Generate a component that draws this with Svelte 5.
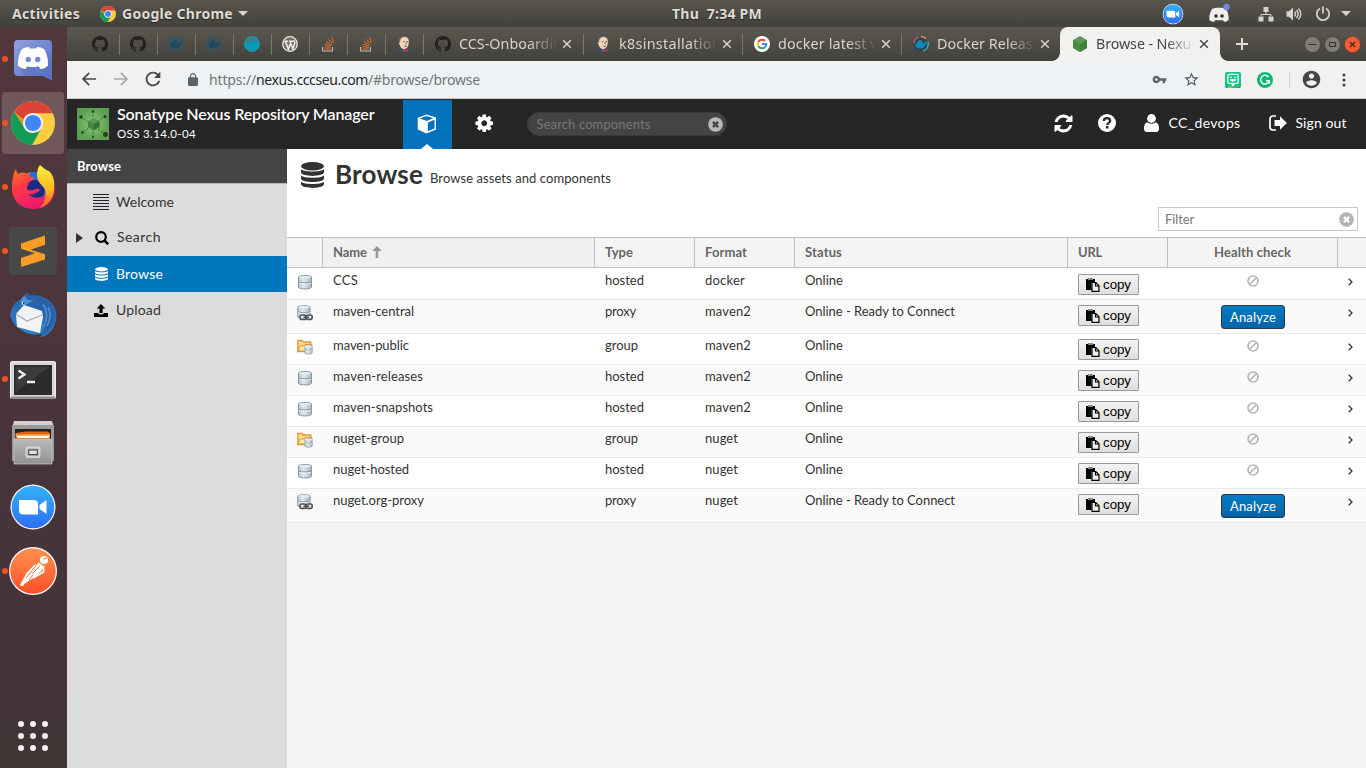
<script>
  const pinned = ['github', 'github', 'dockerDim', 'dockerDim', 'dockerTeal', 'wordpress', 'stack', 'stack', 'jenkins'];
  const tabs = [
    { icon: 'github', label: 'CCS-Onboardin', w: 103, size: 160 },
    { icon: 'jenkins', label: 'k8sinstallation', w: 102, size: 159 },
    { icon: 'google', label: 'docker latest ve', w: 108, size: 159 },
    { icon: 'dockerRing', label: 'Docker Release', w: 104, size: 158 },
    { icon: 'nexus', label: 'Browse - Nexus', w: 102, size: 160, active: true }
  ];
  const dock = [
    { icon: 'discord', running: true },
    { icon: 'chrome', running: true, focused: true },
    { icon: 'firefox', running: true },
    { icon: 'sublime', running: true },
    { icon: 'thunderbird' },
    { icon: 'terminal', running: true },
    { icon: 'files' },
    { icon: 'zoom' },
    { icon: 'postman', running: true }
  ];
  const nav = [
    { icon: 'lines', label: 'Welcome', w: 58 },
    { icon: 'search', label: 'Search', w: 44, tree: true },
    { icon: 'db', label: 'Browse', w: 47, selected: true },
    { icon: 'upload', label: 'Upload', w: 45 }
  ];
  const rows = [
    ['CCS', 25, 'hosted', 'docker', 40],
    ['maven-central', 81, 'proxy', 'maven2', 46],
    ['maven-public', 76, 'group', 'maven2', 46],
    ['maven-releases', 90, 'hosted', 'maven2', 46],
    ['maven-snapshots', 100, 'hosted', 'maven2', 46],
    ['nuget-group', 71, 'group', 'nuget', 33],
    ['nuget-hosted', 76, 'hosted', 'nuget', 33],
    ['nuget.org-proxy', 91, 'proxy', 'nuget', 33]
  ];
  const typeWidth = { hosted: 39, proxy: 31, group: 33 };
  const gh = 'M8 0C3.58 0 0 3.58 0 8c0 3.54 2.29 6.53 5.47 7.59.4.07.55-.17.55-.38 0-.19-.01-.82-.01-1.49-2.01.37-2.53-.49-2.69-.94-.09-.23-.48-.94-.82-1.13-.28-.15-.68-.52-.01-.53.63-.01 1.08.58 1.23.82.72 1.21 1.87.87 2.33.66.07-.52.28-.87.51-1.07-1.78-.2-3.64-.89-3.64-3.95 0-.87.31-1.59.82-2.15-.08-.2-.36-1.02.08-2.12 0 0 .67-.21 2.2.82.64-.18 1.32-.27 2-.27s1.36.09 2 .27c1.53-1.04 2.2-.82 2.2-.82.44 1.1.16 1.92.08 2.12.51.56.82 1.27.82 2.15 0 3.07-1.87 3.75-3.65 3.95.29.25.54.73.54 1.48 0 1.07-.01 1.93-.01 2.2 0 .21.15.46.55.38A8.01 8.01 0 0 0 16 8c0-4.42-3.58-8-8-8z';

  // Spreads the letters of a label evenly over a given width.
  function fit(node, w) {
    const n = [...node.textContent].length;
    const natural = node.getBoundingClientRect().width;
    node.style.letterSpacing = `${(w - natural) / n}px`;
    node.style.width = `${w}px`;
  }
</script>

{#snippet T(text, w)}<span class="t" use:fit={w}>{text}</span>{/snippet}

{#snippet whale(c)}
  <path fill={c} d="M2.200 8h8.500c1 0 1.300-.9 1-1.900l.9-.9c.6.5.8 1 .7 1.500.6-.1 1.100 0 1.500.3-.4.9-1.100 1.300-2.100 1.200-.9 2.700-2.800 4.300-5.700 4.300C3.900 12.500 2.300 11 2.200 8zM3.500 5.900h6.700v2H3.500zM5.400 4h3.200v2H5.400z" />
{/snippet}

{#snippet chromeLogo(s)}
  <svg width={s} height={s} viewBox="0 0 48 48">
    <circle cx="24" cy="24" r="24" fill="#ffcd40" />
    <path fill="#db4437" d="M24 0A24 24 0 0 1 45.500 13.300H24A11 11 0 0 0 14 19.500L3.500 11.600A24 24 0 0 1 24 0z" />
    <path fill="#0f9d58" d="M3.500 11.600 14.500 29.500A11 11 0 0 0 24 35L33 30 23 48A24 24 0 0 1 3.500 11.600z" />
    <path fill="#a52714" opacity=".35" d="M3.500 11.600 13.500 28 15 18z" />
    <circle cx="24" cy="24" r="11" fill="#f1f1f1" /><circle cx="24" cy="24" r="8.800" fill="#4285f4" />
  </svg>
{/snippet}

{#snippet discordFace()}
  <path fill="#fff" d="M12.500 14.500c3-2.200 6-2.700 7.500-2.500l.8 1.600h6.400l.8-1.600c1.500-.2 4.500.3 7.500 2.500 2.300 4 3.800 9.500 3.500 16-2.500 2.700-5 3.200-7.600 3.400l-1.700-2.300 2-1.200c-4.800 2-10.600 2-15.400 0l2 1.200-1.700 2.300c-2.600-.2-5.100-.7-7.600-3.400-.3-6.500 1.200-12 3.500-16z" />
  <circle cx="19.300" cy="24.500" r="2.700" fill="#7289da" /><circle cx="28.700" cy="24.500" r="2.700" fill="#7289da" />
{/snippet}

{#snippet camera()}
  <circle cx="24" cy="24" r="22.500" fill="#fff" /><circle cx="24" cy="24" r="21.300" fill="url(#zm)" />
  <path fill="#fff" d="M10 17h15a4 4 0 0 1 4 4v10.500H14a4 4 0 0 1-4-4zM30.500 22l7-5v14l-7-5z" />
{/snippet}

{#snippet tabIcon(k)}
  <svg class="ti" width="16" height="16" viewBox="0 0 16 16">
    {#if k === 'github'}<path d={gh} fill="#22211f" />
    {:else if k === 'dockerDim'}<circle cx="8" cy="8" r="7.300" fill="#47504f" stroke="#31566a" stroke-width="1.200" />{@render whale('#1f4a66')}
    {:else if k === 'dockerTeal'}<circle cx="8" cy="8" r="7.300" fill="#577477" stroke="#149cb2" stroke-width="1.300" /><path fill="#049ab4" d="M1.300 7.800 3 5.800l1.600 1.100 2-3 1.500 1.800L10 2.800l2.200 3.600L14 4.700l.7 2.800c0 4.600-3 6.800-6.700 6.800s-6.500-2-6.700-6.500z" />
    {:else if k === 'wordpress'}<circle cx="8" cy="8" r="7.300" fill="#716e67" stroke="#ecebe8" stroke-width="1.300" /><path d="M2.600 5.300h3.600M7.200 5.300h4M3.400 5.600l3 7.500 1.900-5.400M8.100 5.600l2.700 7.300 2-5.800c.3-1.300-.8-1.600-1-2.700" fill="none" stroke="#f2f1ef" stroke-width="1.500" />
    {:else if k === 'stack'}<path d="M2.600 11v4h9.800v-4" fill="none" stroke="#c0bfbe" stroke-width="1.100" /><path d="M4.300 13h6.400M4.500 10.800l6.300.5M4.800 8.300l6.200 1.600M6 5.700l5.500 3M8.500 3.300l3.800 4.300M11.800 1.300l1.600 5.300" stroke="#f0702a" stroke-width="1" />
    {:else if k === 'jenkins'}<path fill="#34506a" d="M2 13.500 5 12h6l3 1.500V16H2z" /><path fill="#776a60" d="M2.800 7C2 4 4 .3 8 .2c3.500 0 5.300 2.500 5 6L12 9H4z" /><path fill="#f0d5b8" d="M4.200 4.500C5 1.300 7.300.7 9.500 1c2.700.5 3.500 3 3.200 6-.3 3.500-1.700 6-4.500 6C5.300 13 4 10.500 3.700 8.500 2.500 8 3 6 4.200 6.500z" /><path d="M7 5.700h1.600M10.400 5.700h1.500M8 10c1.200.5 2 .4 3-.2M10 6.500l.3 1.700" fill="none" stroke="#5a453a" stroke-width=".9" /><path fill="#d33833" d="m7 13 2.300 1 2.500-1 .3 2.700-2.700-.8-2.400.9z" />
    {:else if k === 'google'}<circle cx="8" cy="8" r="8" fill="#fff" /><g fill="none" stroke-width="2"><path stroke="#ea4335" d="M4.300 6A4.300 4.300 0 0 1 11 4.900" /><path stroke="#fbbc05" d="M4.300 10a4.300 4.300 0 0 1 0-4" /><path stroke="#34a853" d="M4.300 10a4.300 4.300 0 0 0 6.600 1.200" /><path stroke="#4285f4" d="M8 8h4.300a4.300 4.300 0 0 1-1.500 3.300" /></g>
    {:else if k === 'dockerRing'}<circle cx="8" cy="8" r="7" fill="#34434b" /><g fill="none" stroke-width="1.200"><path stroke="#e95a78" d="M1 7a7.200 7.200 0 0 1 5-6" /><path stroke="#f79a4b" d="M8 .7a7.300 7.300 0 0 1 5 2" /><path stroke="#1ec4ca" d="M14.800 5.500a7.300 7.300 0 0 1-4.500 9.400" /><path stroke="#244d66" d="M1 10a7.300 7.300 0 0 0 6 5.300" /></g>{@render whale('#1288bd')}
    {:else}<path fill="#5c9a54" d="m8 0 7 4v8l-7 4-7-4V4z" /><path fill="#417e3b" d="m8 8 7-4v8l-7 4z" /><path fill="#4a8b43" d="M8 8 1 4v8l7 4z" />{/if}
  </svg>
{/snippet}

{#snippet db(w, h, c)}
  <svg width={w} height={h} viewBox="0 0 24 26" preserveAspectRatio="none" fill={c}>
    <ellipse cx="12" cy="4.200" rx="12" ry="4.200" />
    <path d="M0 7.300c3 3 21 3 24 0v3.300c-1 4.400-23 4.400-24 0zM0 13.500c3 3 21 3 24 0v3.300c-1 4.400-23 4.400-24 0zM0 19.700c3 3 21 3 24 0v2.300c-1 5.200-23 5.200-24 0z" />
  </svg>
{/snippet}

{#snippet clearIcon(bg, fg)}
  <svg width="15" height="15" viewBox="0 0 14 14"><circle cx="7" cy="7" r="6.800" fill={bg} /><path d="m4.600 4.600 4.800 4.800m0-4.800L4.600 9.400" stroke={fg} stroke-width="2.200" /></svg>
{/snippet}

{#snippet cyl()}
  <path fill="url(#cy)" stroke="#8797a3" stroke-width="1" d="M1.500 3C1.500 1 14.500 1 14.500 3v10c0 2.600-13 2.600-13 0z" />
  <ellipse cx="8" cy="3.200" rx="6" ry="1.500" fill="#e3ebf1" /><path d="M2 7.800c2 1.500 10 1.500 12 0" fill="none" stroke="#7f909c" /><path d="M2 9c2 1.500 10 1.500 12 0" fill="none" stroke="#edf3f6" />
{/snippet}

<svg class="defs" width="0" height="0">
  <defs>
    <linearGradient id="zm" x2="0" y2="1"><stop stop-color="#33b2fb" /><stop offset="1" stop-color="#2d6df6" /></linearGradient>
    <linearGradient id="pm" x2="0" y2="1"><stop stop-color="#ff9150" /><stop offset="1" stop-color="#fd4f28" /></linearGradient>
    <linearGradient id="dc" x2="1" y2="1"><stop stop-color="#8fa0dc" /><stop offset="1" stop-color="#556fc5" /></linearGradient>
    <linearGradient id="cy"><stop stop-color="#b6c5d0" /><stop offset=".4" stop-color="#e0e9ef" /><stop offset="1" stop-color="#a5b5c1" /></linearGradient>
    <linearGradient id="ff" x1="0" y1="0" x2=".5" y2="1"><stop stop-color="#ff7d1f" /><stop offset=".4" stop-color="#ff3b42" /><stop offset="1" stop-color="#ee1670" /></linearGradient>
    <linearGradient id="fy" x2="0" y2="1"><stop stop-color="#fff13b" /><stop offset=".6" stop-color="#ffb620" /><stop offset="1" stop-color="#ff5a26" /></linearGradient>
    <linearGradient id="tb" x2="0" y2="1"><stop stop-color="#2c5d9e" /><stop offset="1" stop-color="#2d86cf" /></linearGradient>
    <linearGradient id="fc" x2="0" y2="1"><stop stop-color="#b9b9b7" /><stop offset="1" stop-color="#91918f" /></linearGradient>
    <radialGradient id="lg"><stop stop-color="#8cc878" /><stop offset="1" stop-color="#5b9f50" /></radialGradient>
  </defs>
</svg>

<div class="screen">
  <header class="topbar">
    <div class="left">
      {@render T('Activities', 68)}
      <span class="app">{@render chromeLogo(16)}</span>
      {@render T('Google Chrome', 111)}
      <i class="caret"></i>
    </div>
    <div class="clock">{@render T('Thu  7:34 PM', 90)}</div>
    <div class="tray">
      <svg width="22" height="22" viewBox="0 0 48 48">{@render camera()}</svg>
      <svg class="dtray" width="24" height="22" viewBox="0 0 24 22"><path fill="#eee" d="M5 6c3-1.700 11-1.700 14 0 2 3 3 7 2.600 11-1.500 1.300-3 1.800-4.600 1.800l-1.200-1.500H8.200L7 18.800c-1.600 0-3.100-.5-4.600-1.800C2 13 3 9 5 6z" /><circle cx="9" cy="13" r="1.800" fill="#333" /><circle cx="15" cy="13" r="1.800" fill="#333" /><circle cx="19.500" cy="4" r="3.200" fill="#7289da" /></svg>
      <svg class="net" width="16" height="16" viewBox="0 0 16 16" fill="#d5d3ce"><path d="M5.500 1h5v5h-5zM.5 10.500h5v5h-5zM10.500 10.500h5v5h-5z" /><path d="M8 6v2.500M3 10V8.500h10V10" fill="none" stroke="#d5d3ce" /></svg>
      <svg class="vol" width="16" height="14" viewBox="0 0 16 14"><path fill="#d5d3ce" d="M.5 4.300H3L7 .5v13L3 9.700H.5z" /><path d="M8.500 4.500q2 2.500 0 5M10.500 3q3.200 4 0 8M12.500 1.500q4.500 5.500 0 11" fill="none" stroke="#d5d3ce" stroke-width="1.400" /></svg>
      <svg class="pow" width="16" height="16" viewBox="0 0 16 16" fill="none" stroke="#d5d3ce" stroke-width="1.700"><path d="M5 2.500a6.200 6.200 0 1 0 6 0M8 .5v7" /></svg>
      <i class="caret"></i>
    </div>
  </header>

  <div class="main">
    <aside class="dock">
      {#each dock as d}
        <div class="slot" class:focused={d.focused}>
          {#if d.running}<b class="dot"></b>{/if}
          <svg width="48" height="48" viewBox="0 0 48 48">
            {#if d.icon === 'discord'}
              <path fill="url(#dc)" d="M9 5h30a4 4 0 0 1 4 4v36.500L34 41H9a4 4 0 0 1-4-4V9a4 4 0 0 1 4-4z" />
              <path fill="#5a70bd" opacity=".5" d="m10 33 6 8h18l9 4.500V25l-6-9z" />{@render discordFace()}
            {:else if d.icon === 'chrome'}
              <g transform="translate(2 2)">{@render chromeLogo(44)}</g>
            {:else if d.icon === 'firefox'}
              <circle cx="25" cy="24" r="15" fill="#1f6fe0" /><circle cx="26" cy="27" r="10" fill="#1b2a83" />
              <path fill="url(#ff)" d="M7 6c0 2 1 3 2 5 3-2 6-2 9-.5 1.500-1 3-1.700 4-1.700-1.700 1.600-2 3-1.500 4.700 2.500 0 4.500.5 4.500 2 0 1.600-3 2.200-5.500 3.500 0 3.500-2 5-1.500 7 3 2.500 6 1 9 0 3-.800 5 1.500 2.500 2.500-3 2-6 4-10 2.500 4 5 13 5 17 0 3-4 4-9 2-14l7.500 8c0 12-8 21-21.500 21C12 46 3 37 3 26 3 17 4.500 9 7 6z" />
              <path fill="url(#fy)" d="M31 2c3 2 5 5 9 6 5 5 6 11 5 19-1 9-7 16-14 18 4-5 7-12 5-18-1-4-5-5-7-10-2-6-.5-12 2-15z" />
            {:else if d.icon === 'sublime'}
              <rect width="48" height="48" rx="3" fill="#484848" /><path fill="#ff9d26" d="M12 16.500 36 8.500v9.300l-14.500 5 14.500 4.500v5.200L12 40v-9l14-4.700-14-4.600z" />
            {:else if d.icon === 'thunderbird'}
              <path fill="url(#tb)" d="M1 25C2 13 10 7 17 7c-1-2-1-4 0-6 2 1 3 3 6 3 14 0 24 8 24.500 21C47 35 41 45 31 46l3-4c-9 4-27 0-33-17z" />
              <path fill="#2b61a6" d="M12 14C13 5 25 3 34 7c9 4 13 11 12 20-1 8-6 15-14 18 5-8 5-20-2-26-5-4-12-5-18-5z" /><path fill="#f1f3f4" d="m7 23 8-9 18 6 1 6-3 16L8 36z" /><path d="m7 23 11 7 15-6" fill="none" stroke="#a8aeb2" stroke-width="1.300" /><path fill="#4a93dc" d="M16 4c1 5 5 6 9 5-4 3-9 5-12 6-3-4-1-8 3-11z" /><path d="M34 13c4 6 5 14 1 23M39 16c3 6 3 12-1 19" fill="none" stroke="#4a93dc" stroke-width="1.500" /><circle cx="14.500" cy="12" r="1.500" fill="#fff" /><circle cx="14.800" cy="12" r="1" fill="#222" />
            {:else if d.icon === 'terminal'}
              <rect x="1.500" y="6.500" width="45" height="37" rx="1.500" fill="#d8d8d8" stroke="#efefef" /><path fill="#8e8e8e" d="M2 41.500h44V44H2z" /><rect x="5" y="10" width="38" height="30" fill="#2b2b2b" /><path fill="#3c3c3c" d="M6.500 11.500H41L6.500 37z" /><path d="m9.500 15.500 6 4-6 4M18 27h8" fill="none" stroke="#ececec" stroke-width="2.300" />
            {:else if d.icon === 'files'}
              <path fill="#d2d0d0" d="M5 2h38l2 7H3z" /><path fill="#999" d="M3 6h42v36H3z" /><path fill="#222" d="M6 10h36v10H6z" /><path fill="#d06a22" d="M6.500 14 17 12.500h21l3 1.500v6H6.500z" /><path fill="#ffb253" d="M7 15.500h34v2H7z" /><path fill="#f8f1e8" d="M8 17h32v2H8z" /><path fill="url(#fc)" stroke="#c9c9c9" stroke-width=".7" d="M5 20h38v25H5z" /><rect x="17.500" y="28.500" width="13" height="9.500" rx="1.500" fill="none" stroke="#d4d4d4" stroke-width="2" /><rect x="19.800" y="31" width="8.500" height="4.500" fill="#e3e3e3" stroke="#444" />
            {:else if d.icon === 'zoom'}{@render camera()}
            {:else}
              <circle cx="24" cy="24" r="24" fill="#fff" /><circle cx="24" cy="24" r="22.800" fill="url(#pm)" /><circle cx="35" cy="13" r="4" fill="#fff" /><path fill="#fff" d="M31 15.500 35 19l-4 7-7 5-8 5.500-2.500 3L11 38l3-3 2-4 3.500-7L25 18z" /><path d="M34.500 18v7L24 31M19 25l-7 13" fill="none" stroke="#fff" stroke-width="1.700" /><path d="m28 17-7 9M31 19l-8 8M17 31l4-5M20 33l4-5M34 12l4-1M31 16l4 3" fill="none" stroke="#fd7440" stroke-width="1" />
            {/if}
          </svg>
        </div>
      {/each}
      <div class="grid">{#each Array(9) as _}<i></i>{/each}</div>
    </aside>

    <section class="browser">
      <div class="tabs">
        {#each pinned as p}<div class="pin">{@render tabIcon(p)}</div>{/each}
        {#each tabs as t, i}
          <div class="tab" class:active={t.active} class:plain={i >= 3} style:width="{t.size}px">
            {@render tabIcon(t.icon)}
            <div class="label">{@render T(t.label, t.w)}</div>
            <svg width="10" height="10" viewBox="0 0 10 10"><path d="m1.200 1.200 7.600 7.600m0-7.600L1.200 8.800" stroke="currentColor" stroke-width="1.500" /></svg>
          </div>
        {/each}
        <svg class="plus" width="12" height="12" viewBox="0 0 12 12"><path d="M6 0v12M0 6h12" stroke="#deddda" stroke-width="2" /></svg>
        <div class="wins">
          <svg width="17" height="17" viewBox="0 0 17 17"><circle cx="8.500" cy="8.500" r="8" fill="#7f7d76" stroke="#3f3e39" stroke-width=".8" /><path d="M4.500 8.500h8" stroke="#33322e" /></svg>
          <svg width="17" height="17" viewBox="0 0 17 17"><circle cx="8.500" cy="8.500" r="8" fill="#7f7d76" stroke="#3f3e39" stroke-width=".8" /><path d="M5.500 6.500h6v4h-6z" fill="none" stroke="#33322e" /></svg>
          <svg width="17" height="17" viewBox="0 0 17 17"><circle cx="8.500" cy="8.500" r="8" fill="#f05e38" stroke="#8e3a22" stroke-width=".8" /><path d="m5.800 5.800 5.400 5.400m0-5.400-5.400 5.400" stroke="#3c1b12" stroke-width="1.200" /></svg>
        </div>
      </div>

      <div class="toolbar">
        <svg width="20" height="20" viewBox="0 0 24 24" fill="#46474a"><path d="M20.500 11H7.400l5.500-5.500L11.500 4l-8 8 8 8 1.400-1.500L7.400 13h13.100z" /></svg>
        <svg width="20" height="20" viewBox="0 0 24 24" fill="#a9a9a9"><path d="M3.500 11h13.100l-5.500-5.500L12.500 4l8 8-8 8-1.400-1.500 5.500-5.500H3.500z" /></svg>
        <svg width="22" height="22" viewBox="0 0 24 24" fill="#46474a"><path d="M17.650 6.350C16.200 4.900 14.210 4 12 4c-4.420 0-7.990 3.580-7.990 8s3.570 8 7.990 8c3.730 0 6.840-2.550 7.730-6h-2.080c-.82 2.330-3.040 4-5.650 4-3.310 0-6-2.690-6-6s2.690-6 6-6c1.660 0 3.140.69 4.220 1.780L13 11h7V4l-2.350 2.350z" /></svg>
        <div class="omni">
          <svg width="10" height="13" viewBox="4 1 16 21" preserveAspectRatio="none" fill="#5f6368"><path d="M18 8h-1V6c0-2.760-2.240-5-5-5S7 3.240 7 6v2H6c-1.100 0-2 .9-2 2v10c0 1.100.9 2 2 2h12c1.100 0 2-.9 2-2V10c0-1.100-.9-2-2-2zM15.100 8H8.900V6c0-1.710 1.390-3.100 3.100-3.100s3.100 1.390 3.100 3.100v2z" /></svg>
          <div class="url">{@render T('https://', 47)}<em>{@render T('nexus.cccseu.com', 112)}</em>{@render T('/#browse/browse', 112)}</div>
          <svg width="15" height="15" viewBox="0 0 24 24" fill="#5f6368"><path d="M12.650 10C11.830 7.670 9.610 6 7 6c-3.310 0-6 2.690-6 6s2.690 6 6 6c2.610 0 4.830-1.670 5.650-4H17v4h4v-4h2v-4H12.650zM7 14c-1.100 0-2-.9-2-2s.9-2 2-2 2 .9 2 2-.9 2-2 2z" /></svg>
          <svg class="star" width="17" height="17" viewBox="0 0 24 24" fill="#56595d"><path d="M22 9.240l-7.190-.62L12 2 9.190 8.630 2 9.240l5.460 4.730L5.820 21 12 17.270 18.180 21l-1.630-7.030L22 9.240zM12 15.400l-3.760 2.270 1-4.280-3.320-2.880 4.380-.38L12 6.100l1.710 4.040 4.380.38-3.320 2.880 1 4.280L12 15.400z" /></svg>
        </div>
        <div class="ext">
          <svg width="16" height="16" viewBox="0 0 16 16"><rect width="16" height="16" rx="2" fill="#12c78b" /><path fill="#f2a22c" d="M3 14.500h5L6 16H3z" /><path fill="#3d7ee0" d="M0 13.500 3 16H1z" /><path fill="#df4a3a" d="m16 13-4 3h3z" /><path fill="#fff" d="M4 1.800h8A1.800 1.800 0 0 1 13.800 3.600v6.600A1.800 1.800 0 0 1 12 12h-2l-2 2.500L6 12H4a1.800 1.800 0 0 1-1.800-1.800V3.600A1.800 1.800 0 0 1 4 1.800z" /><path fill="#12c78b" d="M3.500 3h9v7.800h-9z" /><path fill="#fff" d="M5 4.800h1.800V6H5zM9.200 4.800H11V6H9.200zM4.800 7.300h6.400c-.5 3-5.900 3-6.400 0z" /></svg>
          <svg class="gr" width="16" height="16" viewBox="0 0 16 16"><circle cx="8" cy="8" r="8" fill="#0fb878" /><path d="M11.500 5A4.400 4.400 0 1 0 12 9.500M9 8.800h3.300v3" fill="none" stroke="#fff" stroke-width="1.500" /></svg>
          <i class="bar"></i>
          <svg class="acc" width="21" height="21" viewBox="0 0 24 24" fill="#454648"><path d="M12 2C6.480 2 2 6.480 2 12s4.480 10 10 10 10-4.480 10-10S17.520 2 12 2zm0 3c1.660 0 3 1.340 3 3s-1.340 3-3 3-3-1.340-3-3 1.340-3 3-3zm0 14.200c-2.500 0-4.710-1.280-6-3.220.03-1.990 4-3.080 6-3.080 1.990 0 5.970 1.090 6 3.080-1.290 1.940-3.500 3.220-6 3.220z" /></svg>
          <svg class="dots" width="4" height="14" viewBox="0 0 4 14" fill="#46474a"><circle cx="2" cy="2" r="1.600" /><circle cx="2" cy="7" r="1.600" /><circle cx="2" cy="12" r="1.600" /></svg>
        </div>
      </div>

      <div class="nexus">
        <div class="nxhead">
          <svg class="logo" width="32" height="32" viewBox="0 0 32 32"><rect width="32" height="32" fill="url(#lg)" /><path d="M4 9 28 26M28 8 5 25M16 3v26" stroke="#3c6b35" stroke-width="1" stroke-dasharray="2 1.500" /><path fill="#5a9a50" d="m16.500 10 6 3v6l-6 3.500-5.500-3.500v-6z" /><path fill="#38703a" d="m16.500 16 6-3v6l-6 3.500z" /><path fill="#498544" d="m16.500 16-5.500-3v6l5.500 3.500z" /><g fill="#25431f"><circle cx="4" cy="9" r="1.800" /><circle cx="16" cy="3.500" r="1.300" /><circle cx="28" cy="8.500" r="1.500" /><circle cx="5.500" cy="24.500" r="1.300" /><circle cx="16" cy="29" r="1.100" /><circle cx="28.500" cy="26.500" r="2.500" /></g></svg>
          <div class="brand"><strong>{@render T('Sonatype Nexus Repository Manager', 257.500)}</strong><small>{@render T('OSS 3.14.0-04', 79)}</small></div>
          <div class="mode">
            <svg width="20" height="20" viewBox="0 0 20 20"><path fill="#fff" d="M9.500.5 19 3.600v11.800l-9.500 4.100L.7 15.600V3.800z" /><path fill="#0471bd" d="m9.500 2 6.800 2.200L9.700 7 3 4.400zM10.900 8.500l6.600-2.800v8.700l-6.600 2.900z" /></svg>
          </div>
          <svg class="cog" width="20.500" height="20.500" viewBox="0 0 1792 1792" fill="#fff"><path d="M1152 896q0-106-75-181t-181-75-181 75-75 181 75 181 181 75 181-75 75-181zm512-109v222q0 12-8 23t-20 13l-185 28q-19 54-39 91 35 50 107 138 10 12 10 25t-9 23q-27 37-99 108t-94 71q-12 0-26-9l-138-108q-44 23-91 38-16 136-29 186-7 28-36 28h-222q-14 0-24.500-8.500t-11.500-21.500l-28-184q-49-16-90-37l-141 107q-10 9-25 9-14 0-25-11-126-114-165-168-7-10-7-23 0-12 8-23 15-21 51-66.500t54-70.500q-27-50-41-99l-183-27q-13-2-21-12.500t-8-23.500v-222q0-12 8-23t19-13l186-28q14-46 39-92-40-57-107-138-10-12-10-24 0-10 9-23 26-36 98.500-107.500t94.500-71.500q13 0 26 10l138 107q44-23 91-38 16-136 29-186 7-28 36-28h222q14 0 24.500 8.500t11.500 21.500l28 184q49 16 90 37l142-107q9-9 24-9 13 0 25 10 129 119 165 170 7 8 7 22 0 12-8 23-15 21-51 66.500t-54 70.500q26 50 41 98l183 28q13 2 21 12.500t8 23.500z" /></svg>
          <div class="search"><span>{@render T('Search components', 114)}</span>{@render clearIcon('#b9b9b9', '#444')}</div>
          <div class="acts">
            <svg width="21" height="21" viewBox="0 0 1792 1792" fill="#fff"><path d="M1639 1056q0 5-1 7-64 268-268 434.500t-478 166.500q-146 0-282.500-55t-243.500-157l-129 129q-19 19-45 19t-45-19-19-45v-448q0-26 19-45t45-19h448q26 0 45 19t19 45-19 45l-137 137q71 66 161 102t187 36q134 0 250-65t186-179q11-17 53-117 8-23 30-23h192q13 0 22.500 9.500t9.500 22.500zm25-800v448q0 26-19 45t-45 19h-448q-26 0-45-19t-19-45 19-45l138-138q-148-137-349-137-134 0-250 65t-186 179q-11 17-53 117-8 23-30 23h-199q-13 0-22.500-9.500t-9.500-22.500v-7q65-268 270-434.500t480-166.500q146 0 284 55.500t245 156.500l130-129q19-19 45-19t45 19 19 45z" /></svg>
            <svg class="help" width="18" height="18" viewBox="0 0 18 18"><circle cx="9" cy="9" r="9" fill="#fff" /><path d="M5.800 7C6 2.900 12.200 3.300 12.200 6.800c0 2.100-3 2-3 4.200" fill="none" stroke="#262626" stroke-width="2.300" /><path fill="#262626" d="M7.900 12h2.600v2.500H7.900z" /></svg>
            <svg class="user" width="15" height="18" viewBox="0 0 15 18" fill="#fff"><circle cx="7.500" cy="4.500" r="4.400" /><path d="M3.500 8.300c2.500 2 5.500 2 8 0 2.500.5 3.500 3 3.500 6.200 0 2.300-1 3.500-2.500 3.500h-10C1 18 0 16.800 0 14.500c0-3.200 1-5.700 3.500-6.200z" /></svg>
            {@render T('CC_devops', 72)}
            <svg class="out" width="18" height="16" viewBox="0 0 18 16"><path d="M7 1H4a3 3 0 0 0-3 3v8a3 3 0 0 0 3 3h3" fill="none" stroke="#fff" stroke-width="1.700" /><path fill="#fff" d="M5.500 5H11V1.300L17.800 8 11 14.700V11H5.500z" /></svg>
            {@render T('Sign out', 51)}
          </div>
        </div>

        <div class="body">
          <nav>
            <h2>{@render T('Browse', 44)}</h2>
            {#each nav as n}
              <div class="item" class:selected={n.selected} class:tree={n.tree}>
                <span class="tri">{#if n.tree}<svg width="7" height="10" viewBox="0 0 7 10"><path fill="#333" d="M0 0 7 5 0 10z" /></svg>{/if}</span>
                <span class="ic">
                  {#if n.icon === 'lines'}<svg width="16" height="16" viewBox="0 0 16 16"><path d="M0 .5h16M0 3.500h16M0 6.500h16M0 9.500h16M0 12.500h16M0 15.500h16" stroke="#1b2229" /></svg>
                  {:else if n.icon === 'search'}<svg width="14" height="14" viewBox="0 0 14 14" fill="none" stroke="#000"><circle cx="6" cy="6" r="4.800" stroke-width="2.200" /><path d="m9.300 9.300 3.900 3.900" stroke-width="2.600" /></svg>
                  {:else if n.icon === 'db'}{@render db(13, 14, '#fff')}
                  {:else}<svg width="14" height="13" viewBox="0 0 14 13"><path d="M7 0 11.300 4.600H8.600V9H5.400V4.600H2.700zM0 9h4.500v1.200h5V9H14v4H0z" /></svg>{/if}
                </span>
                <span class="nl">{@render T(n.label, n.w)}</span>
              </div>
            {/each}
          </nav>

          <main>
            <div class="title">{@render db(23, 26, '#333')}<h1>{@render T('Browse', 88)}</h1><p>{@render T('Browse assets and components', 181)}</p></div>
            <div class="filterrow"><div class="filter"><span>{@render T('Filter', 29)}</span>{@render clearIcon('#b3b3b3', '#fff')}</div></div>
            <div class="row thead">
              <div></div>
              <div class="sorted">{@render T('Name', 34)}<svg width="10" height="12" viewBox="0 0 10 12"><path fill="#999" d="M5 0 9.800 5H6.300v7H3.700V5H.2z" /></svg></div>
              <div>{@render T('Type', 28)}</div><div>{@render T('Format', 42)}</div><div>{@render T('Status', 37)}</div><div>{@render T('URL', 24)}</div>
              <div class="c">{@render T('Health check', 77)}</div><div></div>
            </div>
            {#each rows as [name, nw, type, format, fw], i}
              <div class="row" class:tall={type === 'proxy'} class:first={i === 0} class:odd={i % 2}>
                <div class="rico">
                  <svg width="16" height="16" viewBox="0 0 16 16">
                    {#if type === 'hosted'}{@render cyl()}
                    {:else if type === 'proxy'}<g transform="translate(-.7 -.7) scale(.95)">{@render cyl()}</g><path fill="#eceeef" d="M3 9h13v6.500H3z" opacity=".6" /><g fill="none" stroke="#4f5357" stroke-width="1.600"><rect x="3" y="10" width="6" height="4.400" rx="2" fill="#eee" /><rect x="9.200" y="10" width="6" height="4.400" rx="2" fill="#eee" /><path d="M6.500 12.200h5.500" /></g>
                    {:else}<path fill="#fbdc83" stroke="#dd9740" stroke-width="1.300" d="M.8 12.500V1.500h4.500l1 1.500h7.500v9.500z" /><path fill="#ffe9a9" stroke="#dd9740" d="m1 12 2-5h4l1-1.500h7L13 12z" /><g transform="translate(7 5.500) scale(.57 .65)">{@render cyl()}</g>{/if}
                  </svg>
                </div>
                <div>{@render T(name, nw)}</div>
                <div>{@render T(type, typeWidth[type])}</div>
                <div>{@render T(format, fw)}</div>
                <div>{#if type === 'proxy'}{@render T('Online - Ready to Connect', 150)}{:else}{@render T('Online', 38)}{/if}</div>
                <div class="cp"><button><svg width="14" height="14" viewBox="0 0 14 14"><path d="M0 1h9v3.500H5.500V12H0z" /><path fill="#888" d="M2 0h5v2H2z" /><path fill="#eee" stroke="#000" stroke-width="1.200" d="M6 4.500h3.800L13 7.700v5.600H6zM9.500 4.500V8H13" /></svg>{@render T('copy', 28)}</button></div>
                <div class="hc">
                  {#if type === 'proxy'}<button class="an">{@render T('Analyze', 46)}</button>
                  {:else}<svg width="12" height="12" viewBox="0 0 12 12" fill="none" stroke="#b3b3b3" stroke-width="1.600"><circle cx="6" cy="6" r="5" /><path d="m2.700 9.300 6.600-6.600" /></svg>{/if}
                </div>
                <div class="go"><svg width="5" height="8" viewBox="0 0 5 8"><path d="m.7.700 3.300 3.300L.7 7.300" fill="none" stroke="#333" stroke-width="1.300" /></svg></div>
              </div>
            {/each}
          </main>
        </div>
      </div>
    </section>
  </div>
</div>

<style>
  :global(body) { margin: 0; }
  * { box-sizing: border-box; }
  svg { display: block; flex: none; }
  .defs { position: absolute; }
  .t { display: inline-block; white-space: pre; flex: none; }
  .screen { width: 1366px; height: 768px; overflow: hidden; display: flex; flex-direction: column; font-family: "Noto Sans", "Open Sans", sans-serif; }
  .topbar { height: 27px; flex: none; background: linear-gradient(#58554d, #42413c); color: #dfdbd2; display: grid; grid-template-columns: 638px 124px 604px; font-size: 14px; font-weight: 700; text-shadow: 0 1px 1px #222; }
  .left, .clock, .tray { display: flex; align-items: center; }
  .left { padding-left: 12px; }
  .clock { width: 90px; margin-left: 34px; padding-bottom: 1px; }
  .app { margin: 0 6px 0 20px; }
  .caret { border: 5px solid transparent; border-top-color: #d5d3ce; border-bottom: 0; margin-left: 5px; }
  .tray { padding-left: 400px; }
  .dtray { margin-left: 23px; }
  .net { margin-left: 27px; }
  .vol { margin-left: 12px; }
  .pow { margin-left: 13px; }
  .tray .caret { margin-left: 10px; }

  .main { display: flex; flex: 1; min-height: 0; }
  .dock { width: 67px; background: linear-gradient(#52383d, #4a353b 45%, #45343a 75%, #403434); display: flex; flex-direction: column; flex: none; }
  .slot { height: 62px; width: 62px; margin: 1px 2px; border-radius: 3px; display: flex; align-items: center; justify-content: center; position: relative; flex: none; }
  .focused { background: #6f575c; }
  .dot { position: absolute; left: 0; top: 28px; width: 6px; height: 6px; border-radius: 50%; background: #e95420; }
  .grid { display: grid; grid-template-columns: repeat(3, 6px); gap: 6px; margin: auto 0 17px 18px; }
  .grid i { width: 6px; height: 6px; border-radius: 50%; background: #f2f1f0; }

  .browser { flex: 1; display: flex; flex-direction: column; min-width: 0; }
  .tabs { height: 34px; flex: none; background: linear-gradient(#5b5850, #42413c); display: flex; align-items: center; padding-left: 15px; color: #d8d5ce; }
  .pin { width: 38px; height: 21px; border-right: 1px solid #7b7871; display: flex; align-items: center; padding-left: 10px; }
  .tab { height: 21px; border-right: 1px solid #7b7871; display: flex; align-items: center; padding-left: 11px; flex: none; font-size: 14.300px; position: relative; }
  .tab.plain { border-right-color: transparent; }
  .label { width: 97px; margin: 0 6px 0 8px; line-height: 20px; mask-image: linear-gradient(90deg, #000 72%, rgba(0, 0, 0, .06) 100%); }
  .active { background: #f2f1f0; color: #43464c; height: 34px; border-radius: 8px 8px 0 0; border: 0; padding-left: 12px; }
  .active::before, .active::after { content: ""; position: absolute; bottom: 0; width: 8px; height: 8px; }
  .active::before { left: -8px; background: radial-gradient(circle at 0 0, transparent 7.500px, #f2f1f0 8px); }
  .active::after { right: -8px; background: radial-gradient(circle at 100% 0, transparent 7.500px, #f2f1f0 8px); }
  .plus { margin-left: 16px; }
  .wins { display: flex; gap: 3px; margin-left: 56px; }

  .toolbar { height: 38px; flex: none; background: #f2f1f0; border-bottom: 1px solid #c9cbc8; display: flex; align-items: center; padding-left: 12px; }
  .toolbar > svg { margin-bottom: 1px; }
  .toolbar > svg + svg { margin-left: 12px; }
  .toolbar > svg:nth-child(3) { margin-left: 11px; }
  .omni { width: 1032px; height: 28px; border-radius: 14px; background: #eef2f4; margin-left: 12px; display: flex; align-items: center; padding: 0 8px 0 12px; flex: none; }
  .url { flex: 1; margin-left: 11px; color: #70757a; font-size: 14px; display: flex; }
  .url em { font-style: normal; color: #25282c; }
  .star { margin-left: 16px; }
  .ext { display: flex; align-items: center; margin-left: 17px; }
  .gr { margin-left: 16px; }
  .bar { width: 1px; height: 16px; background: #cfcfcf; margin: 0 11px 0 16px; }
  .dots { margin-left: 20px; }

  .nexus { flex: 1; display: flex; flex-direction: column; min-height: 0; font-family: Lato, sans-serif; }
  .nxhead { height: 50px; flex: none; background: #262626; color: #fff; display: flex; align-items: center; padding-left: 10px; }
  .brand { width: 286px; padding-left: 8px; display: flex; flex-direction: column; flex: none; }
  .brand strong { font-size: 16px; line-height: 19px; font-weight: 600; margin-top: -3px; }
  .brand small { font-size: 11.500px; line-height: 16px; margin-top: 3px; }
  .brand + .mode { margin-left: 8px; }
  .mode { width: 49px; height: 49px; align-self: flex-end; background: #0471bd; display: flex; align-items: center; justify-content: center; position: relative; padding: 0 2px 2px 0; }
  .mode::after { content: ""; position: absolute; bottom: 0; left: 18px; border: 6px solid transparent; border-bottom: 5px solid #fff; border-top: 0; }
  .cog { margin-left: 22px; margin-top: -2px; }
  .search { width: 200px; height: 24px; margin-left: 32px; border-radius: 12px; background: #444; border: 1px solid #393939; display: flex; align-items: center; justify-content: space-between; padding: 0 3px 0 9px; font-size: 13px; color: #777; }
  .acts { display: flex; align-items: center; margin: -2px 0 0 326px; font-size: 14px; }
  .acts .t { margin-top: -1px; }
  .help { margin-left: 24px; }
  .user { margin: 0 10px 0 28px; }
  .out { margin: 0 9px 0 28px; }

  .body { flex: 1; display: flex; min-height: 0; }
  nav { width: 220px; background: #dcdcdc; flex: none; color: #333; font-size: 14px; }
  h2 { margin: 0; height: 35px; padding-left: 10px; background: #444; border-bottom: 1px solid #b5b5b5; color: #fff; font-size: 13px; line-height: 35px; }
  .item { height: 36px; display: flex; align-items: center; padding-left: 9px; }
  .item.tree { padding-bottom: 1px; }
  .item.selected { background: #0076bd; color: #fff; }
  .tri { width: 16px; }
  .ic { width: 18px; margin-right: 6px; display: flex; justify-content: center; }
  .tree .ic { width: 19px; padding-left: 1px; }
  .nl { padding-bottom: 2px; }

  main { flex: 1; background: #f4f4f4; color: #333; font-size: 13px; min-width: 0; }
  .title { height: 52px; background: #fff; display: flex; padding: 13px 0 0 14px; }
  h1 { margin: -5px 7px 0 11px; font-size: 26px; line-height: 34px; }
  p { margin: 7px 0 0; line-height: 18px; }
  .filterrow { height: 36px; background: #fff; padding: 6px 8px 0 0; display: flex; justify-content: flex-end; }
  .filter { width: 200px; height: 24px; border: 1px solid #c8c8c8; display: flex; align-items: center; justify-content: space-between; padding: 0 3px 0 6px; color: #777; }
  .row { display: grid; grid-template-columns: 36px 272px 100px 100px 273px 100px 170px 28px; height: 31px; background: #fff; border-bottom: 1px solid #e9e9e9; line-height: 18px; }
  .row > div { padding: 2px 0 0 10px; }
  .row.odd { background: #fafafa; }
  .row.tall { height: 34px; }
  .row.first { height: 32px; padding-top: 1px; }
  .thead { border-top: 1px solid #bfbfbf; border-bottom-color: #bfbfbf; background: #f4f4f4; font-weight: 700; color: #666; }
  .row.thead > div { border-right: 1px solid #bfbfbf; padding-top: 5px; }
  .row.thead > div:last-child { border: 0; }
  .row.thead > .sorted { background: #f0f0f0; display: flex; gap: 5px; }
  .sorted svg { margin-top: 3px; }
  .row.thead > .c { padding-left: 46px; }
  .row > .rico { padding: 5px 0 0 10px; }
  .row > .cp { padding-top: 5px; }
  button { display: flex; align-items: center; height: 21px; width: 61px; padding: 0 0 0 7px; margin: 0; gap: 3px; border: 1px solid #999; border-radius: 1px; background: linear-gradient(#f4f4f4, #dedede); font: 13.300px "Liberation Sans", sans-serif; color: #000; }
  .row > .hc { display: flex; justify-content: center; padding: 6px 0 0 0; }
  .row.tall > .hc { padding-top: 5px; }
  .an { width: 64px; height: 24px; background: linear-gradient(#067bc2, #0263a8); border: 1px solid #263b4d; border-radius: 3px; color: #fff; font: 13px Lato, sans-serif; padding: 0 0 1px 8px; }
  .row > .go { padding: 9px 0 0 10px; }
</style>
